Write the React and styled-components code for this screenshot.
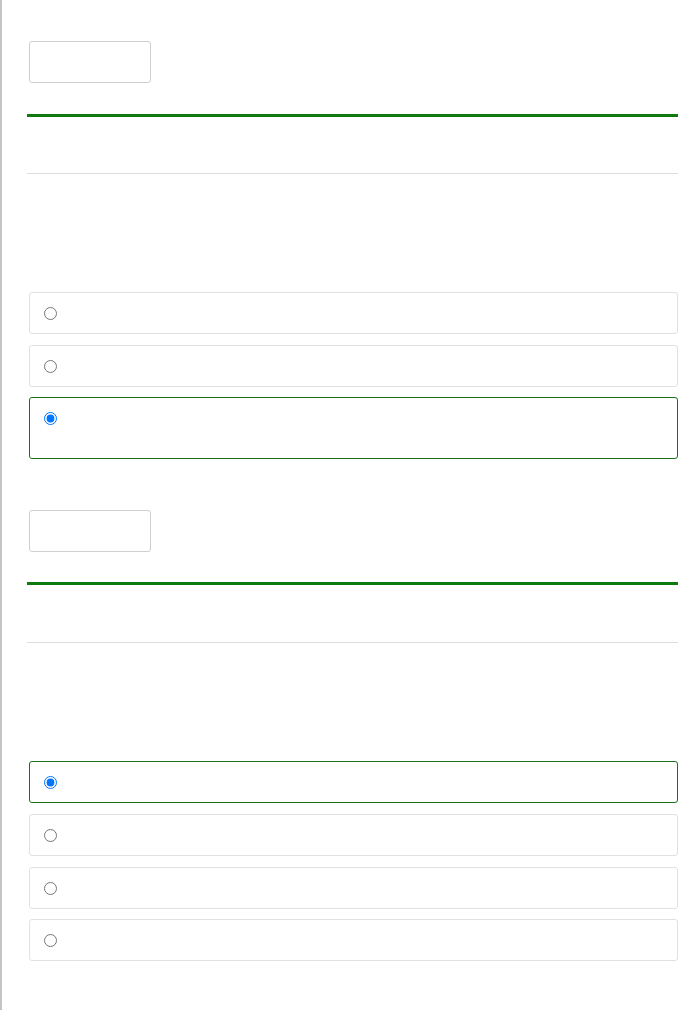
import React from "react";
import styled, { createGlobalStyle } from "styled-components";

const Global = createGlobalStyle`
  html, body { margin: 0; padding: 0; background: #ffffff; }
  body { font-family: "Liberation Sans", Arial, sans-serif; }
  * { box-sizing: border-box; }
`;

const Page = styled.div`
  min-height: 1010px;
  width: 678px;
  border-left: 2px solid #c4c4c4;
  padding: 41px 0 0 25px;
`;

const Section = styled.section`
  display: flex;
  flex-direction: column;
  & + & { margin-top: 51px; }
`;

const Field = styled.input`
  display: block;
  width: 122px;
  height: 42px;
  margin: 0 0 0 2px;
  border: 1px solid #cfcfcf;
  border-radius: 3px;
  background: #fff;
  font: inherit;
  outline: none;
`;

const Accent = styled.div`
  height: 3px;
  margin-top: ${p => p.$gap}px;
  background: #0f7b0f;
`;

const Rule = styled.div`
  height: 1px;
  margin-top: ${p => p.$gap}px;
  background: #dcdcdc;
`;

const Options = styled.div`
  display: flex;
  flex-direction: column;
  gap: 10.667px;
  margin: 118px 0 0 2px;
`;

const Option = styled.label`
  display: flex;
  align-items: flex-start;
  height: ${p => p.$tall ? 62 : 42}px;
  padding: 14px 14px 13px;
  border: 1px solid ${p => p.$selected ? "#1c6f1c" : "#e1e1e1"};
  border-radius: 3px;
  background: #fff;
  cursor: pointer;
`;

const Radio = styled.input`
  width: 13px;
  height: 13px;
  margin: 0;
  accent-color: #0075ff;
`;

function Question({ name, options, accent, rule }) {
  return (
    <Section>
      <Field type="text" aria-label={name} />
      <Accent $gap={accent} />
      <Rule $gap={rule} />
      <Options>
        {options.map((o, i) => (
          <Option key={i} $selected={o.selected} $tall={o.tall}>
            <Radio type="radio" name={name} defaultChecked={o.selected} />
          </Option>
        ))}
      </Options>
    </Section>
  );
}

export default function App() {
  return (
    <>
      <Global />
      <Page>
        <Question
          name="q1"
          accent={31}
          rule={56}
          options={[{}, {}, { selected: true, tall: true }]}
        />
        <Question
          name="q2"
          accent={30}
          rule={57}
          options={[{ selected: true }, {}, {}, {}]}
        />
      </Page>
    </>
  );
}
